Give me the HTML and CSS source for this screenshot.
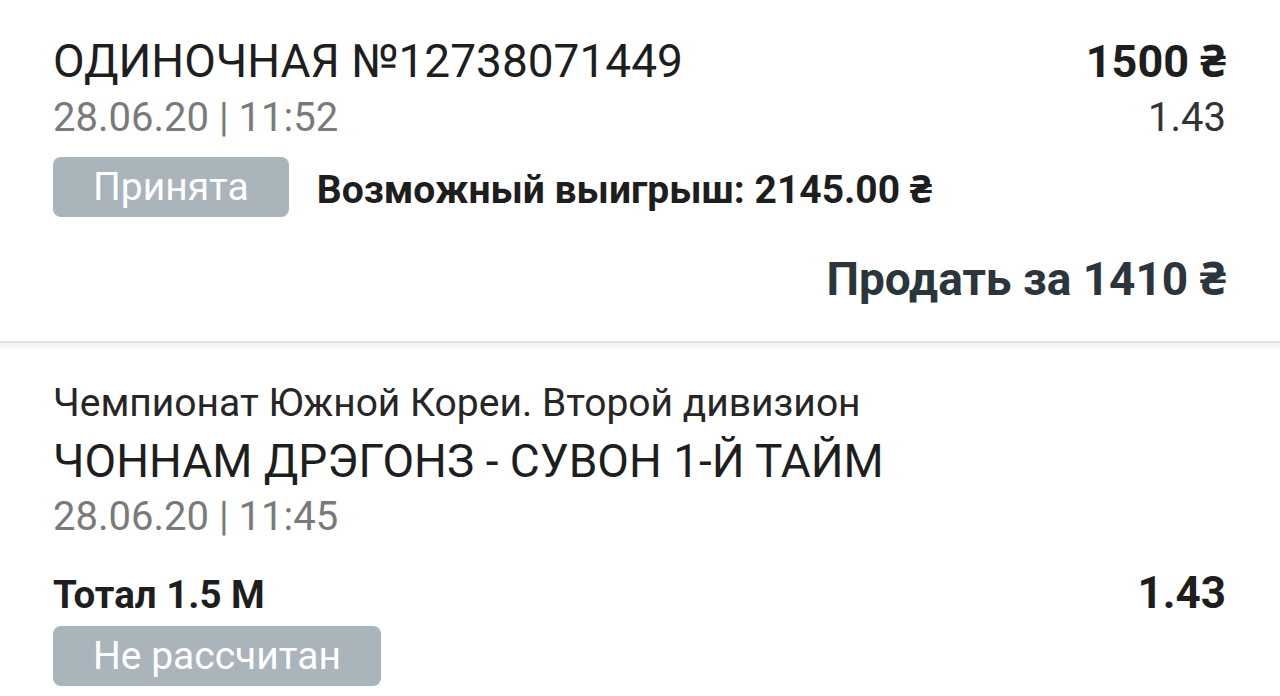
FILE: index.html
```html
<!DOCTYPE html>
<html lang="ru">
<head>
<meta charset="utf-8">
<title>Ставка</title>
<link rel="stylesheet" href="styles.css">
</head>
<body>
<section class="bet">
  <div class="row row-head">
    <div class="title">ОДИНОЧНАЯ №12738071449</div>
    <div class="amount">1500 ₴</div>
  </div>
  <div class="row row-date">
    <div class="date">28.06.20 | 11:52</div>
    <div class="coef">1.43</div>
  </div>
  <div class="row-status">
    <span class="badge">Принята</span>
    <span class="win">Возможный выигрыш: 2145.00 ₴</span>
  </div>
  <div class="sell">Продать за 1410 ₴</div>
</section>
<div class="divider"></div>
<section class="event">
  <div class="league">Чемпионат Южной Кореи. Второй дивизион</div>
  <div class="match">ЧОННАМ ДРЭГОНЗ - СУВОН 1-Й ТАЙМ</div>
  <div class="date date-event">28.06.20 | 11:45</div>
  <div class="row row-market">
    <div class="market">Тотал 1.5 М</div>
    <div class="market-coef">1.43</div>
  </div>
  <span class="badge badge-event">Не рассчитан</span>
</section>
</body>
</html>
```
FILE: styles.css
```css
html, body {
  margin: 0;
  padding: 0;
  background: #ffffff;
}
body {
  font-family: Roboto, "Noto Sans", "Liberation Sans", sans-serif;
  color: #1e1e1e;
  width: 1280px;
  height: 696px;
  overflow: hidden;
}
.bet {
  padding: 35px 54px 35px 53px;
}
.row {
  display: flex;
  justify-content: space-between;
  align-items: baseline;
}
.title {
  font-size: 46px;
  line-height: 52px;
  color: #1e1e1e;
}
.amount {
  font-size: 45px;
  line-height: 52px;
  font-weight: 700;
  color: #1e1e1e;
}
.row-date {
  margin-top: 7px;
}
.date {
  font-size: 40px;
  line-height: 46px;
  color: #7a7a7a;
}
.coef {
  font-size: 40px;
  line-height: 46px;
  color: #333333;
}
.row-status {
  display: flex;
  align-items: center;
  margin-top: 16px;
}
.badge {
  display: inline-flex;
  align-items: center;
  height: 60px;
  padding: 0 40px;
  border-radius: 8px;
  background: #aab4bb;
  color: #ffffff;
  font-size: 39px;
  box-sizing: border-box;
}
.win {
  margin-left: 28px;
  font-size: 39px;
  font-weight: 700;
  color: #1e1e1e;
}
.sell {
  margin-top: 35px;
  text-align: right;
  font-size: 46px;
  line-height: 54px;
  font-weight: 700;
  color: #2b353c;
}
.divider {
  height: 8px;
  border-top: 2px solid #e2e2e2;
  background: linear-gradient(#f0f0f0, #ffffff);
}
.event {
  padding: 29px 54px 0 53px;
}
.league {
  font-size: 39px;
  line-height: 46px;
  color: #262626;
}
.match {
  margin-top: 8px;
  font-size: 46px;
  line-height: 54px;
  color: #1e1e1e;
}
.date-event {
  margin-top: 6px;
}
.row-market {
  margin-top: 30px;
}
.market {
  font-size: 38.5px;
  line-height: 46px;
  font-weight: 700;
  color: #1e1e1e;
}
.market-coef {
  font-size: 44px;
  line-height: 46px;
  font-weight: 700;
  color: #1e1e1e;
}
.badge-event {
  margin-top: 8px;
}
```
